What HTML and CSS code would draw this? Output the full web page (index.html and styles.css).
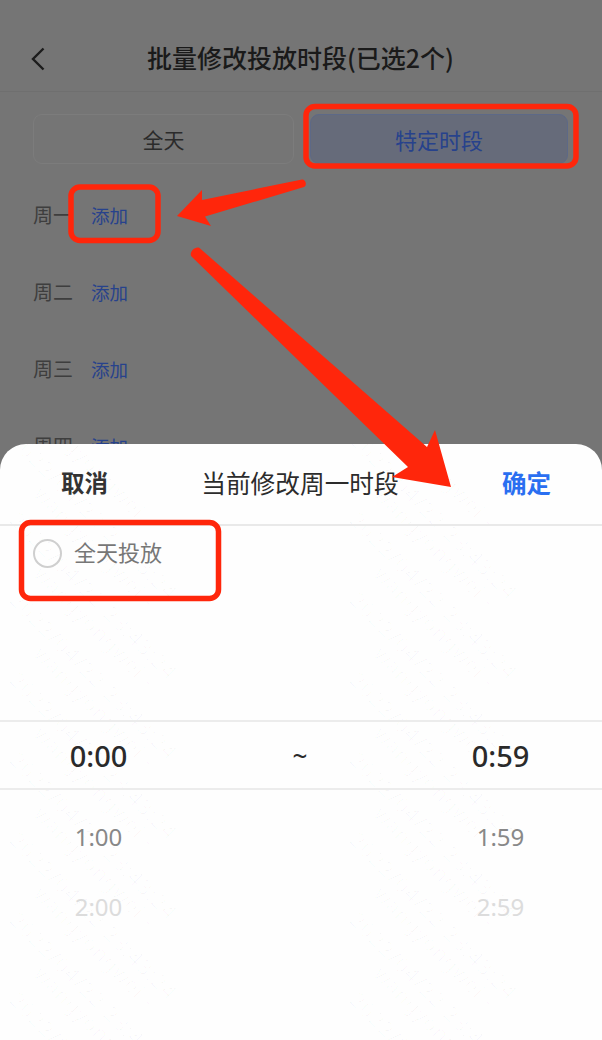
FILE: index.html
```html
<!DOCTYPE html>
<html lang="zh">
<head>
<meta charset="utf-8">
<title>批量修改投放时段</title>
<link rel="stylesheet" href="styles.css">
</head>
<body>
<div class="screen">
  <main class="page">
    <header class="nav">
      <svg class="back" width="16" height="26" viewBox="0 0 16 26"><path d="M13.5 2.500 3 13l10.500 10.500" fill="none" stroke="#1c1c1c" stroke-width="2.400"/></svg>
      <h1 class="nav-title">批量修改投放时段(已选2个)</h1>
    </header>
    <div class="segments">
      <div class="seg">全天</div>
      <div class="seg seg-on">特定时段</div>
    </div>
    <div class="days">
      <div class="day"><span class="day-name">周一</span><span class="add">添加</span></div>
      <div class="day"><span class="day-name">周二</span><span class="add">添加</span></div>
      <div class="day"><span class="day-name">周三</span><span class="add">添加</span></div>
      <div class="day"><span class="day-name">周四</span><span class="add">添加</span></div>
    </div>
  </main>

  <section class="sheet">
    <div class="watermarks" aria-hidden="true">
      <div class="wm"><span>wangyongwei -</span><span>2022/04/22 23:43:24</span></div><div class="wm"><span>wangyongwei -</span><span>2022/04/22 23:43:24</span></div>
      <div class="wm"><span>wangyongwei -</span><span>2022/04/22 23:43:24</span></div><div class="wm"><span>wangyongwei -</span><span>2022/04/22 23:43:24</span></div>
      <div class="wm"><span>wangyongwei -</span><span>2022/04/22 23:43:24</span></div><div class="wm"><span>wangyongwei -</span><span>2022/04/22 23:43:24</span></div>
      <div class="wm"><span>wangyongwei -</span><span>2022/04/22 23:43:24</span></div><div class="wm"><span>wangyongwei -</span><span>2022/04/22 23:43:24</span></div>
      <div class="wm"><span>wangyongwei -</span><span>2022/04/22 23:43:24</span></div><div class="wm"><span>wangyongwei -</span><span>2022/04/22 23:43:24</span></div>
      <div class="wm"><span>wangyongwei -</span><span>2022/04/22 23:43:24</span></div><div class="wm"><span>wangyongwei -</span><span>2022/04/22 23:43:24</span></div>
      <div class="wm"><span>wangyongwei -</span><span>2022/04/22 23:43:24</span></div><div class="wm"><span>wangyongwei -</span><span>2022/04/22 23:43:24</span></div>
      <div class="wm"><span>wangyongwei -</span><span>2022/04/22 23:43:24</span></div><div class="wm"><span>wangyongwei -</span><span>2022/04/22 23:43:24</span></div>
    </div>
    <div class="sheet-head">
      <span class="cancel">取消</span>
      <span class="sheet-title">当前修改周一时段</span>
      <span class="ok">确定</span>
    </div>
    <div class="allday">
      <span class="radio"></span>
      <span class="allday-label">全天投放</span>
    </div>
    <div class="picker">
      <div class="pick-row pick-current"><span>0:00</span><span class="tilde">~</span><span>0:59</span></div>
      <div class="pick-row pick-next"><span>1:00</span><span></span><span>1:59</span></div>
      <div class="pick-row pick-far"><span>2:00</span><span></span><span>2:59</span></div>
    </div>
  </section>

  <svg class="marks" width="602" height="1040" viewBox="0 0 602 1040" aria-hidden="true">
    <rect class="frame" x="306" y="106.500" width="270" height="59.500" rx="9"/>
    <rect class="frame" x="71" y="187" width="87" height="53.500" rx="9"/>
    <rect class="frame" x="21.500" y="522.500" width="197" height="76" rx="9"/>
    <path class="arrow" d="M302 179.500c3.500-1 5.500 6 2 7.500L205 216.500l6 9.500-34-10 25-26v10z"/>
    <path class="arrow" d="M191.500 256.500c-3-3.500 3.500-11 8-8.500L427 447l8-17 16 57-59-10 16-10z"/>
  </svg>
</div>
</body>
</html>
```
FILE: styles.css
```css
* { box-sizing: border-box; margin: 0; padding: 0; }
html, body { width: 602px; height: 1040px; overflow: hidden; }
body { font-family: "Noto Sans CJK SC", "Noto Sans", sans-serif; background: #757575; }
.screen { position: relative; width: 602px; height: 1040px; overflow: hidden; }

.page { height: 1040px; background: #757575; }
.nav { position: relative; height: 92px; padding-top: 23px; display: flex; align-items: center; justify-content: center; border-bottom: 1px solid #6f6f6f; }
.back { position: absolute; left: 30px; top: 46px; }
.nav-title { font-size: 25px; font-weight: 500; color: #1a1a1a; line-height: 32px; margin-left: -1px; }

.segments { display: flex; gap: 16px; padding: 22px 34px 0 33px; }
.seg { flex: 0 0 261px; height: 50px; border: 1px solid #7c7c7c; border-radius: 9px; display: flex; align-items: center; justify-content: center; font-size: 21px; color: #2b2b2b; }
.seg-on { flex-basis: 258px; background: #666b7a; border-color: #5d6987; color: #27428c; font-size: 22px; }

.days { padding: 12px 33px 0; }
.day { height: 77px; display: flex; align-items: center; gap: 18px; }
.day-name { font-size: 20px; color: #3e3e3e; }
.add { font-size: 18.500px; color: #27428c; }

.sheet { position: absolute; left: 0; right: 0; top: 444px; bottom: 0; background: #fefefe; border-radius: 26px 26px 0 0; overflow: hidden; }
.watermarks { position: absolute; inset: 0; display: grid; grid-template-columns: 340px 240px; grid-auto-rows: 80px; padding: 0 0 0 24px; margin-top: -18px; pointer-events: none; }
.wm { position: relative; height: 80px; }
.wm span { position: absolute; white-space: nowrap; font-family: "Noto Sans", sans-serif; font-size: 21px; font-weight: 300; letter-spacing: 1.500px; color: rgba(0,0,0,.03); transform: rotate(45deg); transform-origin: 0 0; }
.wm span:first-child { left: 24px; top: -26px; }
.wm span:last-child { left: 0; top: 0; }

.sheet-head { position: relative; height: 82px; border-bottom: 2px solid #e9e9e9; display: grid; grid-template-columns: 1fr auto 1fr; align-items: center; padding: 0 51px 4px 61px; }
.cancel { font-size: 23.500px; font-weight: 700; color: #333; }
.sheet-title { font-size: 24.700px; color: #2c2c2c; margin-right: 12px; }
.ok { font-size: 24.500px; font-weight: 700; color: #2a6ff1; justify-self: end; }

.allday { position: relative; height: 196px; display: flex; align-items: flex-start; gap: 12px; padding: 13px 0 0 33px; border-bottom: 2px solid #ececec; }
.radio { width: 29px; height: 29px; border: 2px solid #cfcfcf; border-radius: 50%; }
.allday-label { font-size: 22px; line-height: 24px; color: #777; }

.picker { position: relative; }
.pick-row { display: grid; grid-template-columns: 197px 1fr 203px; justify-items: center; align-items: center; font-family: "Noto Sans", sans-serif; }
.pick-current { height: 68px; border-bottom: 2px solid #ececec; font-size: 29px; font-weight: 500; color: #2a2a2a; }
.tilde { font-size: 26px; margin-left: 4px; }
.pick-next { height: 93px; font-size: 24px; color: #888; }
.pick-far { height: 47px; font-size: 24px; color: #dcdcdc; }

.marks { position: absolute; left: 0; top: 0; pointer-events: none; }
.frame { fill: none; stroke: #ff260b; stroke-width: 5.500; }
.arrow { fill: #ff260b; stroke: none; }
```
